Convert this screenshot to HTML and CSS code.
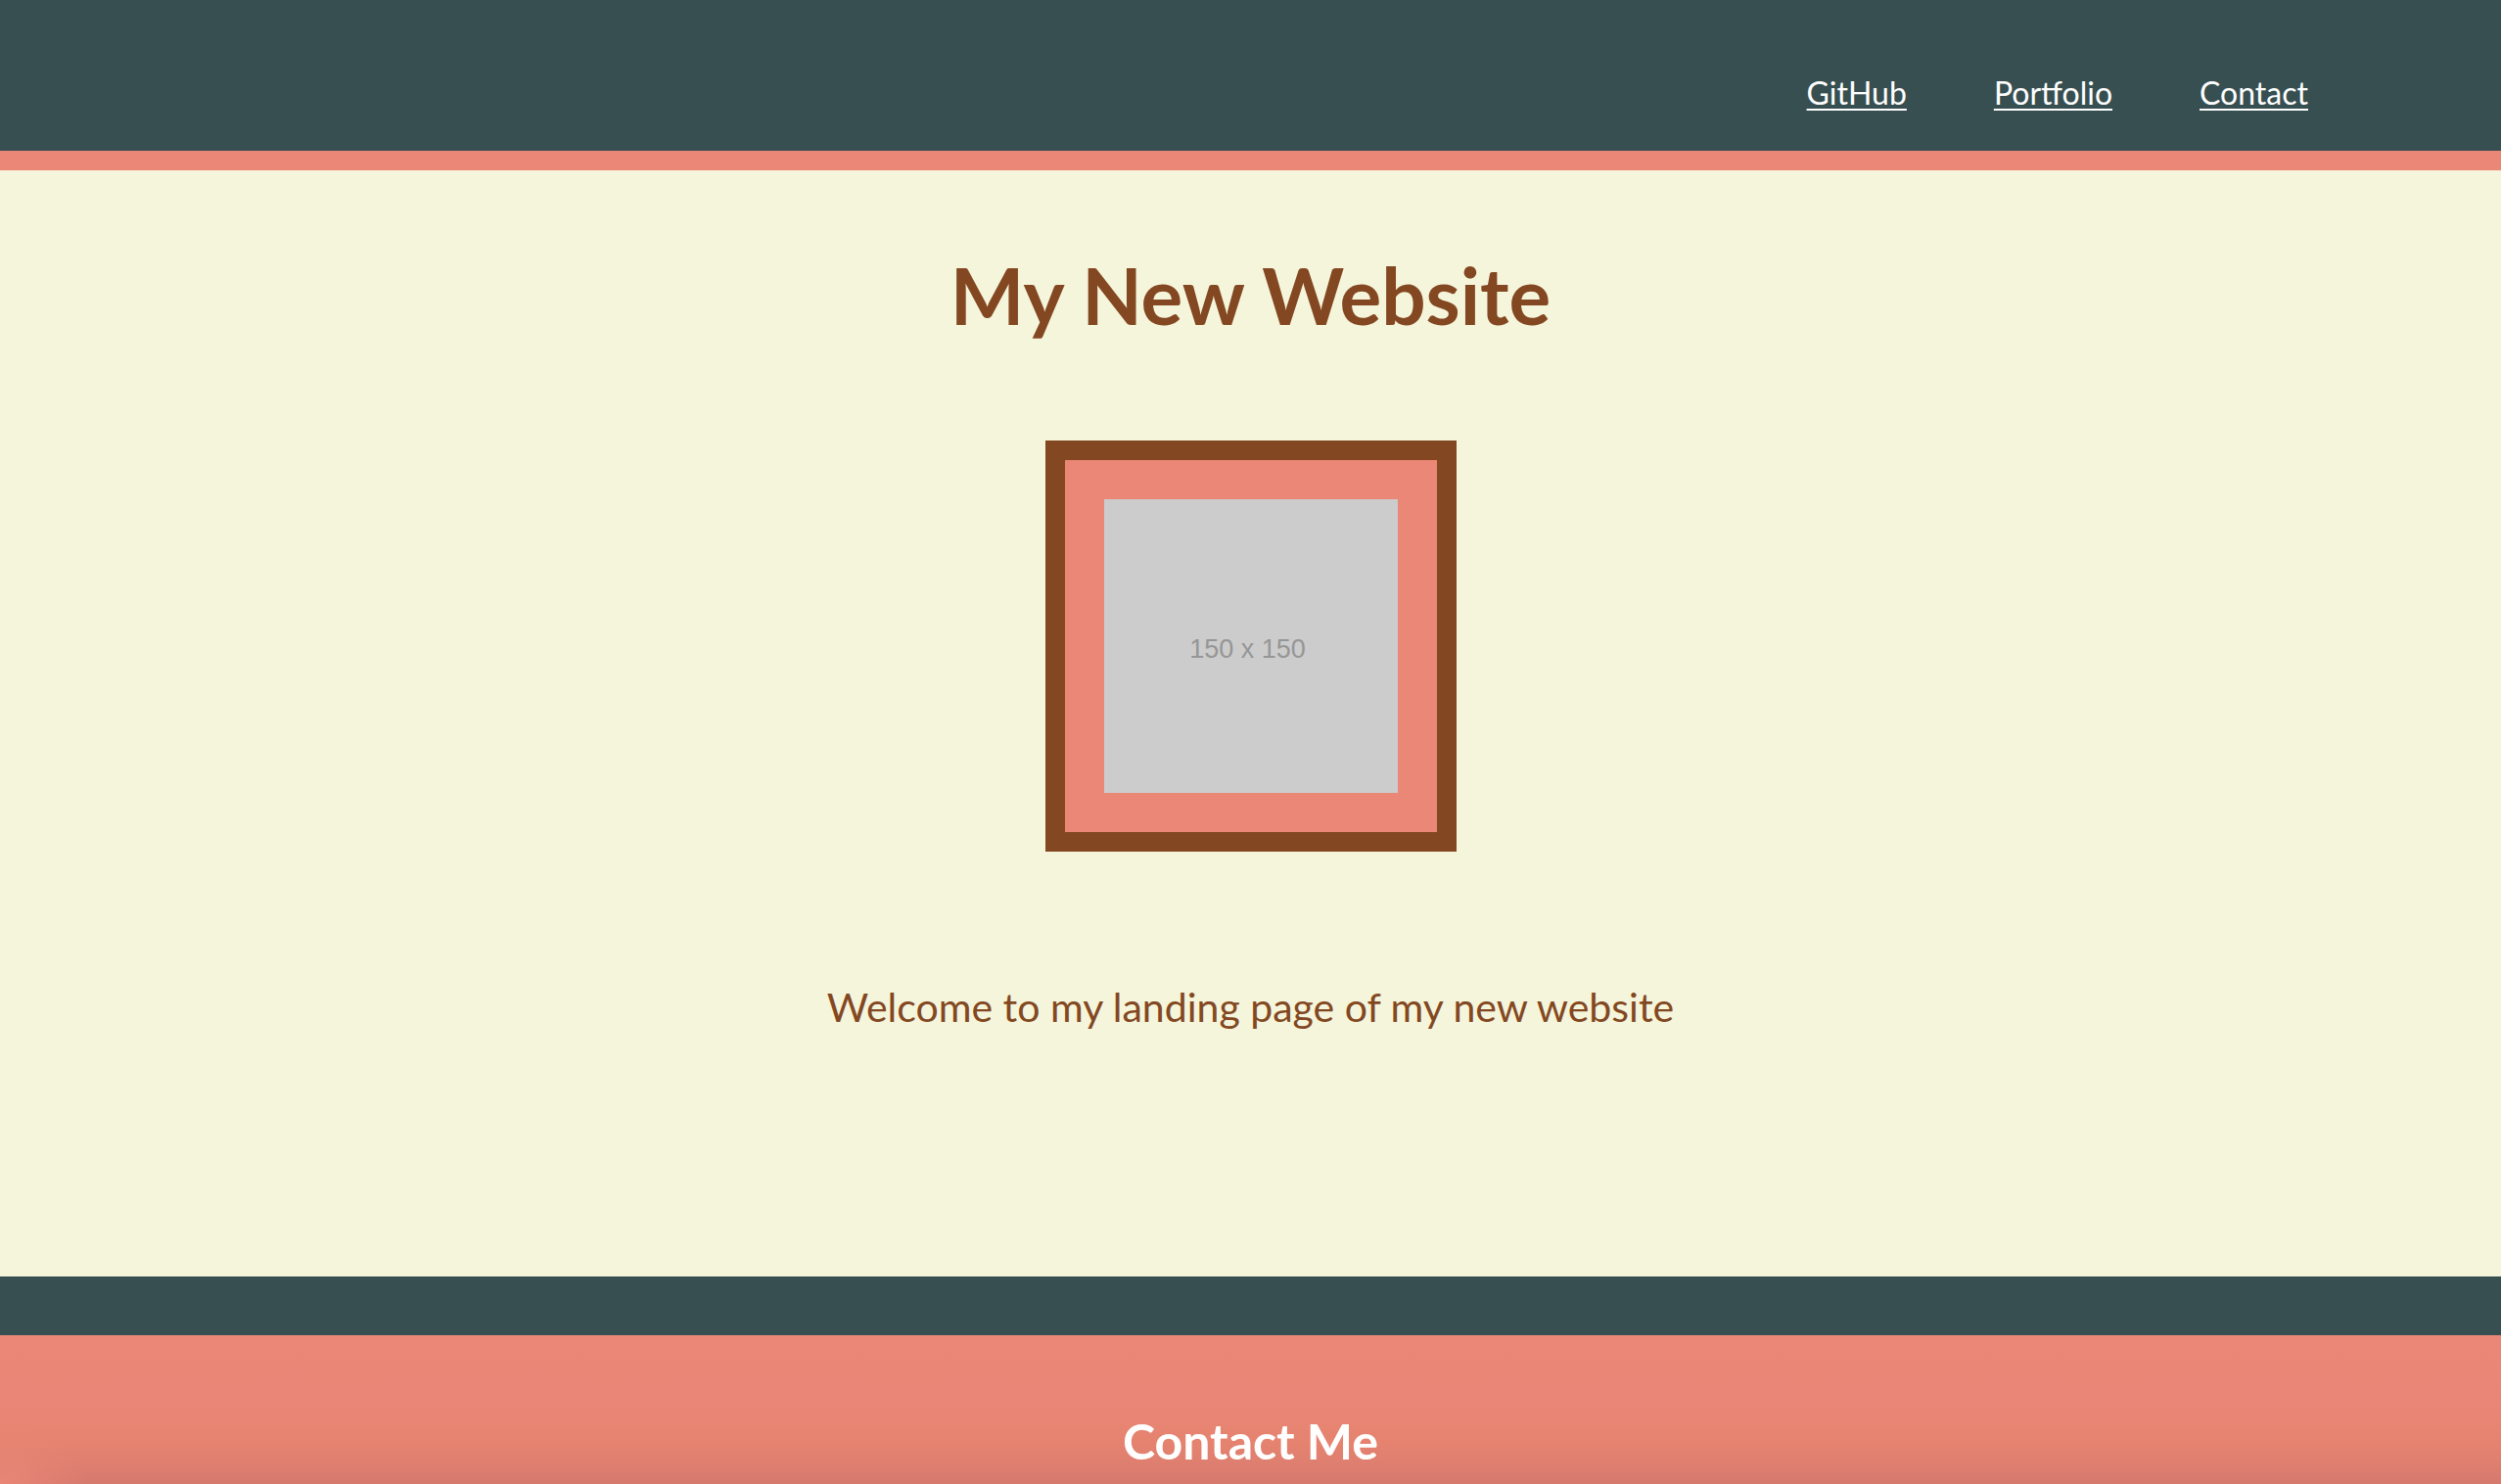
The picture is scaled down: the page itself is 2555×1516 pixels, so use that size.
FILE: index.html
```html
<!DOCTYPE html>
<html lang="en">
<head>
<meta charset="utf-8">
<title>My New Website</title>
<link rel="stylesheet" href="styles.css">
</head>
<body>
<header class="site-header">
  <nav class="nav">
    <a class="nav-link" href="#">GitHub</a>
    <a class="nav-link" href="#">Portfolio</a>
    <a class="nav-link" href="#">Contact</a>
  </nav>
</header>
<main class="hero">
  <h1 class="hero-title">My New Website</h1>
  <div class="hero-frame">
    <div class="placeholder">150 x 150</div>
  </div>
  <p class="hero-text">Welcome to my landing page of my new website</p>
</main>
<div class="divider"></div>
<section class="contact">
  <h2 class="contact-title">Contact Me</h2>
</section>
</body>
</html>
```
FILE: styles.css
```css
html, body {
  margin: 0;
  padding: 0;
}
body {
  font-family: Lato, "Open Sans", sans-serif;
  background: #f5f5dc;
}
.site-header {
  background: #374f51;
  height: 154px;
  border-bottom: 20px solid #eb8777;
  box-sizing: content-box;
}
.nav {
  display: flex;
  justify-content: flex-end;
  gap: 89px;
  padding: 75px 197px 0 0;
}
.nav-link {
  color: #ffffff;
  font-size: 32px;
  line-height: 40px;
  text-decoration: underline;
  text-underline-offset: 4px;
  text-decoration-thickness: 2px;
}
.hero {
  background: #f5f5dc;
  display: flex;
  flex-direction: column;
  align-items: center;
  padding: 77px 0 250px;
}
.hero-title {
  margin: 0;
  font-size: 80px;
  line-height: 100px;
  font-weight: 700;
  color: #834821;
}
.hero-frame {
  margin-top: 99px;
  border: 20px solid #834821;
  background: #eb8777;
  padding: 40px;
}
.placeholder {
  width: 300px;
  height: 300px;
  background: #cccccc;
  color: #969696;
  font-family: "Liberation Sans", Arial, sans-serif;
  font-size: 27px;
  display: flex;
  align-items: center;
  justify-content: center;
  padding-top: 6px;
  padding-right: 6px;
  box-sizing: border-box;
}
.hero-text {
  margin: 134px 0 0;
  font-size: 41px;
  line-height: 50px;
  color: #834821;
}
.divider {
  height: 60px;
  background: #374f51;
}
.contact {
  height: 152px;
  box-sizing: border-box;
  padding-top: 78px;
  display: flex;
  flex-direction: column;
  align-items: center;
  background:
    radial-gradient(ellipse 90px 60px at 0 100%, rgba(235, 135, 119, 0.9), rgba(235, 135, 119, 0) 100%),
    linear-gradient(to bottom, #eb8777 0, #ea8677 45%, #e5836f 72%, #df7f70 85%, #d6796d 100%);
}
.contact-title {
  margin: 0;
  color: #ffffff;
  font-size: 50px;
  line-height: 60px;
  font-weight: 700;
}
```
